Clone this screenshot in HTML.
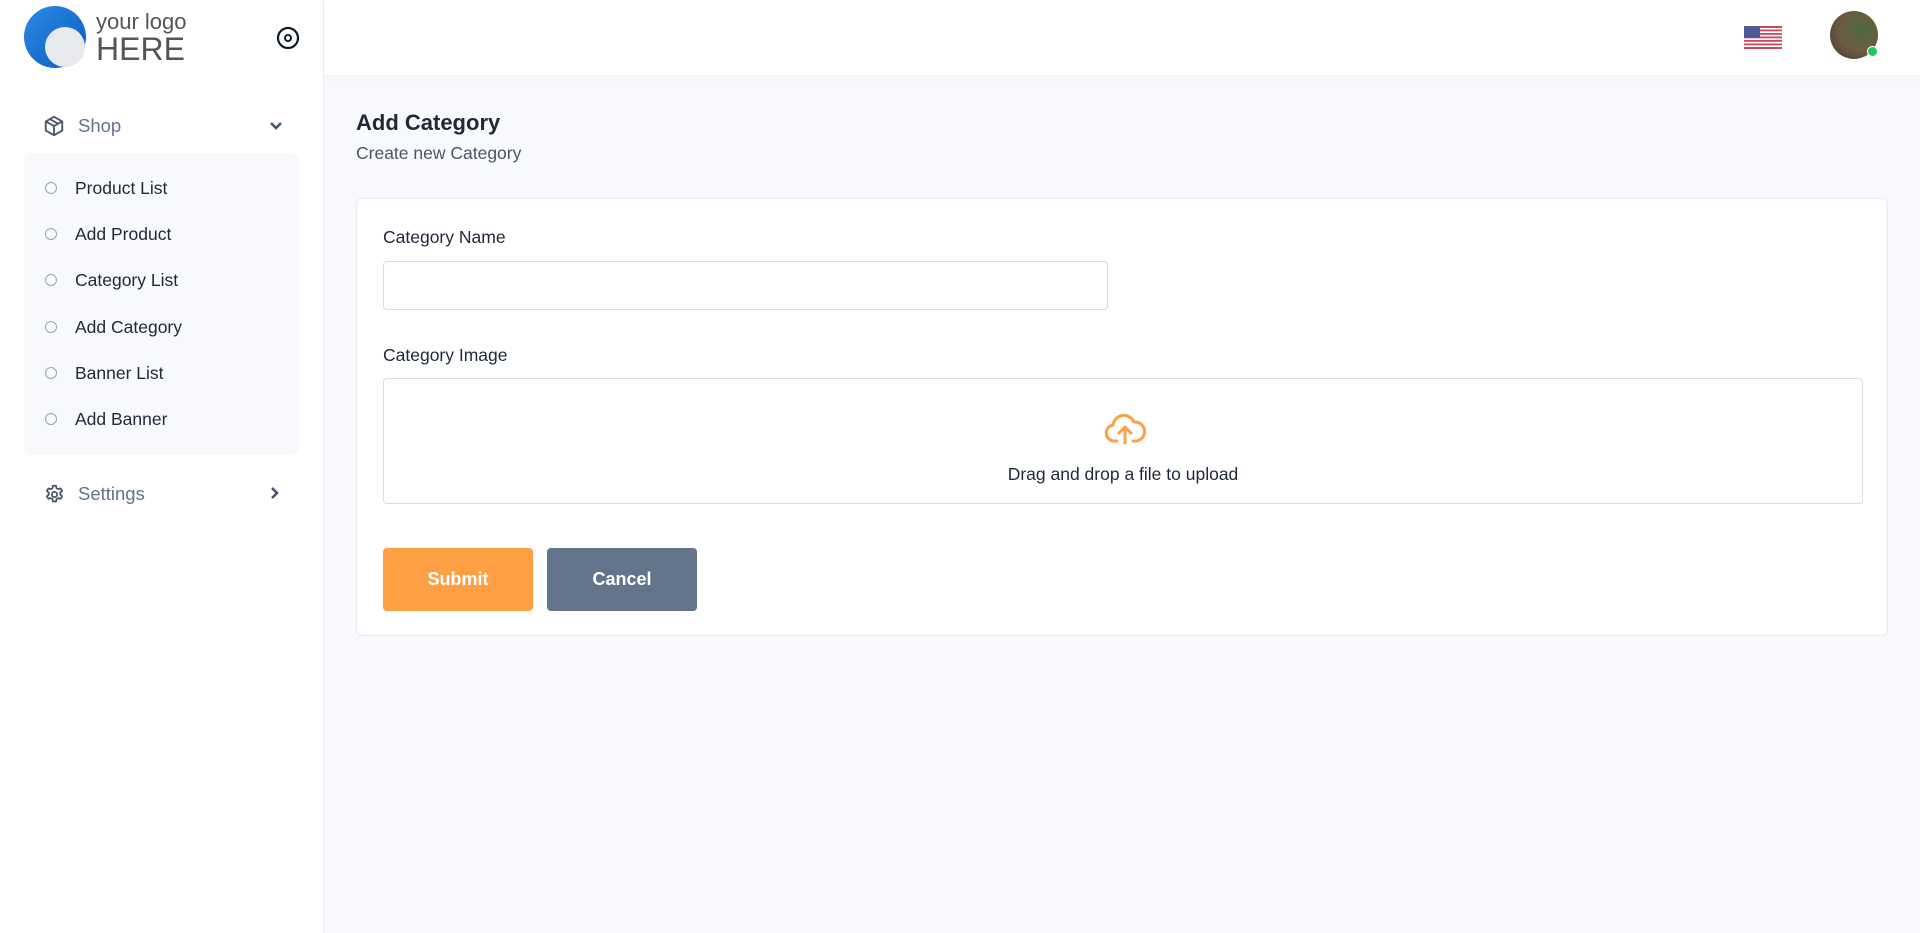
<!DOCTYPE html>
<html><head><meta charset="utf-8"><style>
*{box-sizing:border-box;margin:0;padding:0}
body{width:1920px;height:933px;background:#f8f9fc;font-family:"Liberation Sans",sans-serif;position:relative;overflow:hidden;color:#1f2937}
.side{position:absolute;left:0;top:0;width:324px;height:933px;background:#fff;border-right:1px solid #eceef2}
.hdr{position:absolute;left:324px;top:0;right:0;height:75px;background:#fff;box-shadow:0 2px 6px rgba(0,0,0,.03)}
.abs{position:absolute}
.sub{position:absolute;left:24px;top:153px;width:275px;height:302px;background:#f8f9fc;border-radius:6px}
.item{position:absolute;left:75px;font-size:17.5px;color:#1f2937}
.dot{position:absolute;left:45px;width:12px;height:12px;border:1px solid #9ca3af;border-radius:50%}
.card{position:absolute;left:356px;top:198px;width:1532px;height:438px;background:#fff;border:1px solid #e8eaef;border-radius:6px}
.lbl{position:absolute;left:26px;font-size:17.5px;color:#1f2937}
.btn{position:absolute;top:349px;height:63px;width:150px;border-radius:4px;color:#fff;font-weight:bold;font-size:18px;text-align:center;line-height:63px}
</style></head><body>
<div class="side">
  <div class="abs" style="left:24px;top:6px;width:62px;height:62px;border-radius:50%;background:linear-gradient(135deg,#2b8ae6,#0d5bbd)"></div>
  <div class="abs" style="left:45px;top:27px;width:40px;height:40px;border-radius:50%;background:#e8e9ec"></div>
  <div class="abs" style="left:96px;top:9px;font-size:22px;color:#555">your logo</div>
  <div class="abs" style="left:96px;top:31px;font-size:32px;color:#555">HERE</div>
  <svg class="abs" style="left:276px;top:26px" width="24" height="24" viewBox="0 0 24 24"><circle cx="12" cy="12" r="10" fill="none" stroke="#111827" stroke-width="2.2"/><circle cx="12" cy="12" r="3" fill="none" stroke="#111827" stroke-width="2"/></svg>
  <svg class="abs" style="left:43px;top:115px" width="22" height="22" viewBox="0 0 24 24" fill="none" stroke="#475569" stroke-width="2" stroke-linejoin="round"><path d="M12 2l9 5v10l-9 5-9-5V7z"/><path d="M3 7l9 5 9-5M12 12v10M7.5 4.5l9 5"/></svg>
  <div class="abs" style="left:78px;top:115px;font-size:18.5px;color:#64748b">Shop</div>
  <svg class="abs" style="left:268px;top:118px" width="16" height="16" viewBox="0 0 16 16"><path d="M3 5l5 5 5-5" fill="none" stroke="#475569" stroke-width="2.6"/></svg>
  <div class="sub"></div>
  <div class="dot" style="top:182px"></div><div class="item" style="top:178px">Product List</div>
  <div class="dot" style="top:228px"></div><div class="item" style="top:224px">Add Product</div>
  <div class="dot" style="top:274px"></div><div class="item" style="top:270px">Category List</div>
  <div class="dot" style="top:321px"></div><div class="item" style="top:317px">Add Category</div>
  <div class="dot" style="top:367px"></div><div class="item" style="top:363px">Banner List</div>
  <div class="dot" style="top:413px"></div><div class="item" style="top:409px">Add Banner</div>
  <svg class="abs" style="left:44px;top:484px" width="21" height="21" viewBox="0 0 24 24" fill="none" stroke="#475569" stroke-width="2"><circle cx="12" cy="12" r="3"/><path d="M10.3 2h3.4l.6 2.8 2 1.1 2.7-.9 1.7 2.9-2.1 1.9v2.4l2.1 1.9-1.7 2.9-2.7-.9-2 1.1-.6 2.8h-3.4l-.6-2.8-2-1.1-2.7.9-1.7-2.9 2.1-1.9v-2.4L3.3 7.9 5 5l2.7.9 2-1.1z"/></svg>
  <div class="abs" style="left:78px;top:483px;font-size:18.5px;color:#64748b">Settings</div>
  <svg class="abs" style="left:267px;top:485px" width="16" height="16" viewBox="0 0 16 16"><path d="M5 3l5 5-5 5" fill="none" stroke="#475569" stroke-width="2.6"/></svg>
</div>
<div class="hdr">
  <svg class="abs" style="left:1420px;top:26px" width="38" height="23" viewBox="0 0 38 23"><rect width="38" height="23" fill="#fff"/><g fill="#c9485b"><rect y="0" width="38" height="2"/><rect y="3.5" width="38" height="1.8"/><rect y="7" width="38" height="1.8"/><rect y="10.5" width="38" height="1.8"/><rect y="14" width="38" height="1.8"/><rect y="17.5" width="38" height="1.8"/><rect y="21" width="38" height="2"/></g><rect width="16" height="12" fill="#4f5a92"/></svg>
  <div class="abs" style="left:1506px;top:11px;width:48px;height:48px;border-radius:50%;background:radial-gradient(circle at 65% 40%,#4d6b3a,#6d5b44 50%,#3d3a2e)"></div>
  <div class="abs" style="left:1543px;top:46px;width:11px;height:11px;border-radius:50%;background:#22c55e;border:1px solid #fff"></div>
</div>
<div class="abs" style="left:356px;top:110px;font-size:22px;font-weight:bold;color:#1f2937">Add Category</div>
<div class="abs" style="left:356px;top:143px;font-size:17.5px;color:#4b5563">Create new Category</div>
<div class="card">
  <div class="lbl" style="top:28px">Category Name</div>
  <div class="abs" style="left:26px;top:62px;width:725px;height:49px;border:1px solid #d9dce3;border-radius:4px"></div>
  <div class="lbl" style="top:146px">Category Image</div>
  <div class="abs" style="left:26px;top:179px;width:1480px;height:126px;border:1px solid #d9dce3;border-radius:4px">
    <svg class="abs" style="left:720px;top:34px" width="42" height="32" viewBox="0 0 42 32" fill="none" stroke="#ff9f43" stroke-width="3" stroke-linecap="round" stroke-linejoin="round"><path d="M13 28H10a8 8 0 0 1-1-15.9A11 11 0 0 1 30 9a8 8 0 0 1 2 19h-3"/><path d="M21 30V15M15 20l6-6 6 6"/></svg>
    <div style="position:absolute;left:0;right:0;top:85px;text-align:center;font-size:17.5px;color:#1f2937">Drag and drop a file to upload</div>
  </div>
  <div class="btn" style="left:26px;background:#ff9f43">Submit</div>
  <div class="btn" style="left:190px;background:#64748b">Cancel</div>
</div>
</body></html>
